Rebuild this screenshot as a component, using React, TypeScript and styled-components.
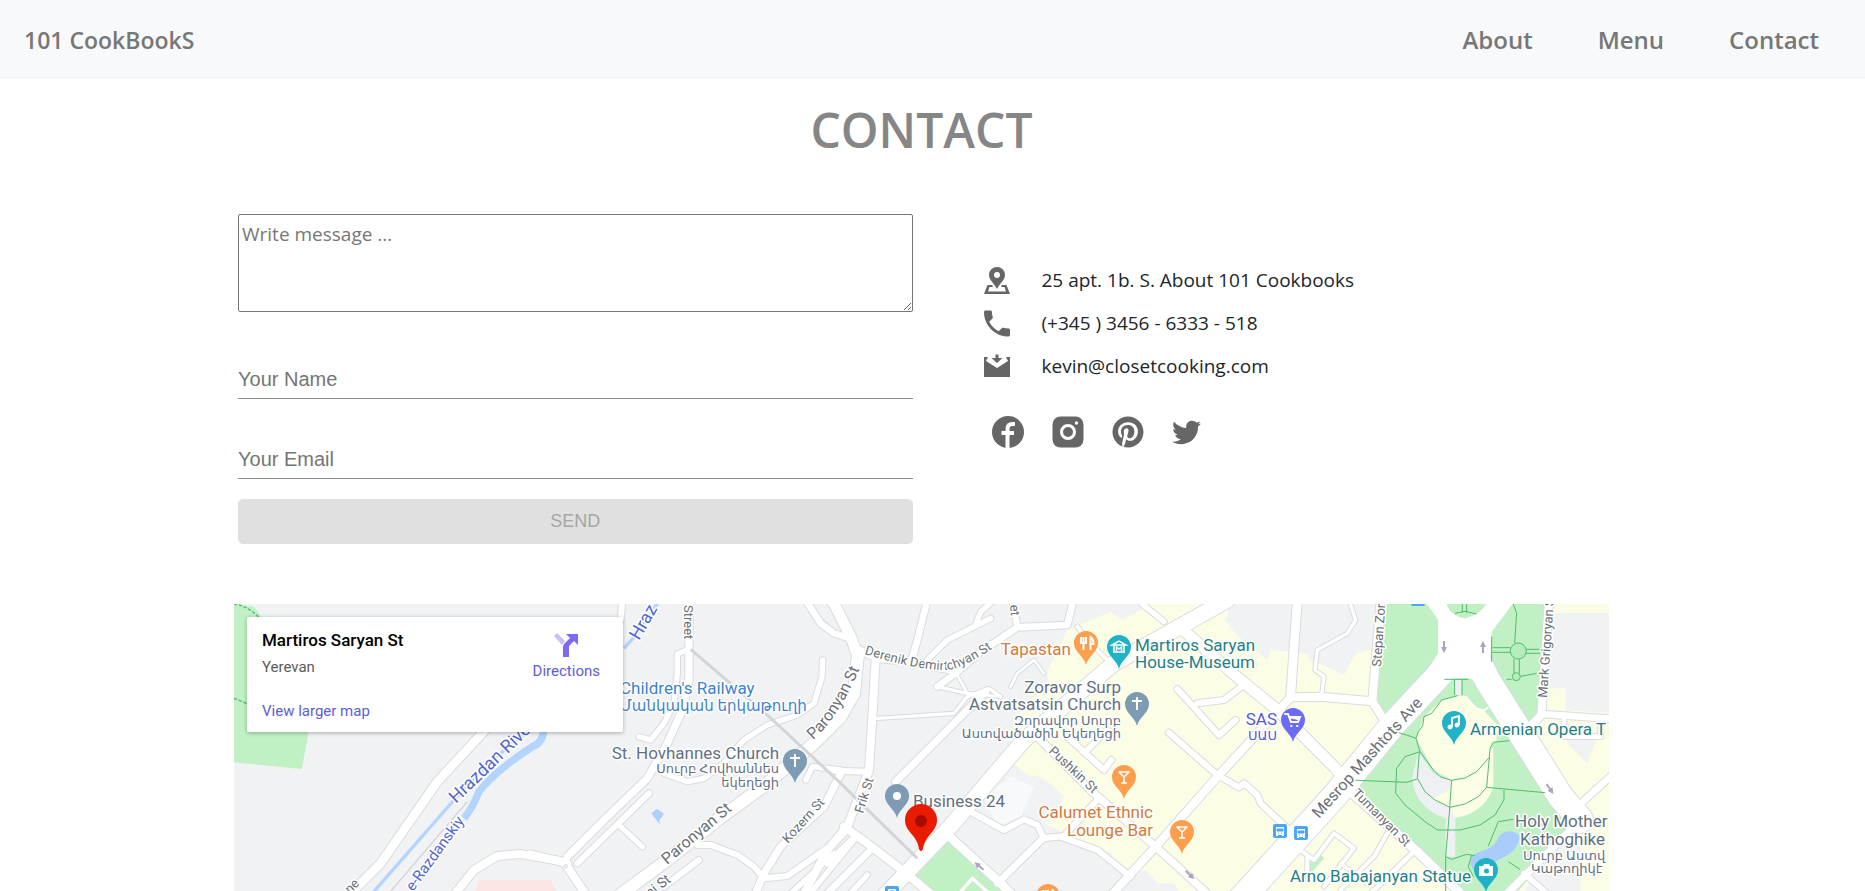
import React from 'react';
import styled, { createGlobalStyle } from 'styled-components';
import { FaPinterest, FaTwitter } from 'react-icons/fa';

const GlobalStyle = createGlobalStyle`
  *, *::before, *::after { box-sizing: border-box; }
  body {
    margin: 0;
    background: #fff;
    color: #212529;
    font-family: 'Open Sans', 'Noto Sans', sans-serif;
  }
`;

const Page = styled.div`
  display: flex;
  flex-direction: column;
  min-height: 100vh;
`;

const Header = styled.header`
  display: flex;
  align-items: center;
  justify-content: space-between;
  min-height: 79px;
  padding: 0 46px 0 24px;
  background: #f8f9fb;
`;

const NavLink = styled.a`
  color: #777;
  font-size: 24px;
  font-weight: 600;
  line-height: 36px;
  text-decoration: none;
`;

const Brand = styled(NavLink)`
  font-size: 23px;
`;

const Nav = styled.nav`
  display: flex;
  gap: 65px;
`;

const Main = styled.main`
  display: flex;
  flex: 1;
  flex-direction: column;
  width: 100%;
  padding: 0 22px 0 0;
`;

const Container = styled.div`
  display: flex;
  flex: 1;
  flex-direction: column;
  width: 100%;
  max-width: 1375px;
  margin: 0 auto;
`;

const Title = styled.h1`
  margin: 17px 0 50px;
  color: #868686;
  font-size: 48px;
  font-weight: 600;
  line-height: 68px;
  text-align: center;
`;

const Columns = styled.div`
  display: grid;
  grid-template-columns: 1fr 1fr;
  margin-bottom: 60px;
`;

const Form = styled.form`
  display: flex;
  flex-direction: column;
  padding: 0 9px 0 4px;
`;

const Message = styled.textarea`
  height: 98px;
  margin-bottom: 48px;
  padding: 4px 3px;
  border: 1px solid #767676;
  border-radius: 2px;
  background: #fff;
  font-family: 'Open Sans', 'Noto Sans', sans-serif;
  font-size: 19px;
  line-height: 30px;
  resize: vertical;
  &::placeholder { color: #777; }
`;

const Field = styled.input`
  height: 39px;
  margin-bottom: 41px;
  padding: 0;
  border: 0;
  border-bottom: 1px solid #8c8c8c;
  background: transparent;
  font-family: 'Liberation Sans', Arial, sans-serif;
  font-size: 20px;
  line-height: 24px;
  &::placeholder { color: #757575; }
  &:last-of-type { margin-bottom: 20px; }
`;

const SendButton = styled.button`
  height: 45px;
  border: 0;
  border-radius: 5px;
  background: #e0e0e0;
  color: #a6a6a6;
  font-family: 'Liberation Sans', Arial, sans-serif;
  font-size: 18px;
`;

const Details = styled.address`
  display: flex;
  flex-direction: column;
  padding: 44px 0 0 62px;
  font-style: normal;
`;

const DetailRow = styled.div`
  display: flex;
  align-items: center;
  gap: 32px;
  height: 43px;
  color: #212529;
  font-size: 19px;
  line-height: 28px;
  svg { width: 26px; height: 27px; margin-top: 2px; flex: none; fill: #666; }
`;

const SocialRow = styled.div`
  display: flex;
  align-items: center;
  gap: 28px;
  margin: 29px 0 0 8px;
`;

const SocialLink = styled.a`
  display: flex;
  align-items: center;
  justify-content: center;
  height: 32px;
  color: #666;
`;

const MapFrame = styled.section`
  position: relative;
  flex: 1;
  min-height: 287px;
  overflow: hidden;
  background: #f1f2f4;
`;

const MapCanvas = styled.svg`
  position: absolute;
  inset: 0;
  width: 100%;
  height: 100%;
  font-family: Roboto, 'DejaVu Sans', sans-serif;
`;

const PlaceCard = styled.div`
  position: absolute;
  top: 13px;
  left: 13px;
  display: flex;
  justify-content: space-between;
  width: 376px;
  height: 115px;
  padding: 12px 23px 10px 15px;
  border-radius: 2px;
  background: #fff;
  box-shadow: 0 1px 4px rgba(0, 0, 0, 0.3);
  font-family: Roboto, sans-serif;
  font-size: 15px;
  line-height: 20px;
  a { color: #5c5ce0; text-decoration: none; }
`;

const PlaceText = styled.div`
  display: flex;
  flex-direction: column;
  align-items: flex-start;
`;

const PlaceName = styled.strong`
  color: #000;
  font-size: 17px;
  font-weight: 500;
  line-height: 22px;
`;

const PlaceCity = styled.span`
  margin: 6px 0 24px;
  color: #5b5b5b;
`;

const Directions = styled.a`
  display: flex;
  flex-direction: column;
  align-items: center;
  gap: 4px;
  padding-top: 4px;
`;

type Road = [width: number, points: string];

/* Survey grid: three units to one map pixel. */
const roads: Road[] = [
  [26, '800,340 610,545 440,790 350,880'],
  [24, '660,885 720,810 790,768 860,762 990,785 1010,815 1060,890'],
  [18, '1165,0 1160,60'],
  [22, '1365,0 1365,240 1345,330 1300,430 1240,535 1115,655 1000,770'],
  [16, '1365,148 1330,162 1330,220 1320,310 1290,370 1250,420 1215,410'],
  [18, '1245,580 1030,790'],
  [16, '1160,680 1225,740'],
  [22, '890,762 1000,790'],
  [36, '1110,920 1300,780 1450,660 1600,550 1740,430 1820,350 1860,280 1872,160'],
  [32, '1872,170 1850,110 1800,10 1790,0'],
  [20, '1715,0 1760,70 1800,100 1850,115'],
  [16, '1766,180 1764,230 1740,310 1690,345 1600,375 1530,420 1470,490 1410,535 1360,545 1290,520'],
  [16, '1716,540 1735,500 1820,510'],
  [24, '1925,180 1915,350 1905,510 1840,680 1780,750 1700,900'],
  [18, '1800,512 1905,515'],
  [22, '1820,520 1770,620 1640,740 1590,820 1560,890'],
  [18, '1390,735 1430,735 1510,765 1560,800 1590,835 1660,828 1800,730 1840,690'],
  [18, '1290,860 1395,780'],
  [16, '1660,890 1800,760'],
  [16, '1720,890 1860,720'],
  [22, '1865,145 1930,175 2030,185 2150,210'],
  [20, '2080,0 2050,120 2032,185'],
  [16, '2080,180 2140,120 2230,75 2270,55'],
  [16, '2225,75 2240,35 2275,5'],
  [18, '2335,0 2350,80'],
  [20, '2110,260 2165,220 2240,155 2350,82 2500,75 2518,0'],
  [10, '1930,355 2160,340 2200,290 2265,265 2300,290'],
  [10, '2110,260 2220,285'],
  [8, '2170,225 2200,280 2300,290'],
  [8, '2330,260 2350,220 2400,180 2430,220'],
  [22, '1985,545 2110,420 2255,275'],
  [46, '1930,910 2140,690 2370,420 2640,190 2820,90 2980,0'],
  [24, '1830,680 1900,730 2010,815 2100,890'],
  [20, '1780,790 1865,710'],
  [20, '1780,880 1915,745'],
  [16, '1840,890 1900,825'],
  [26, '2130,695 2300,850 2340,890'],
  [18, '2200,630 2310,690 2370,658 2410,675 2430,715 2490,708 2590,600'],
  [20, '2290,850 2430,712'],
  [18, '2480,710 2590,750 2690,830'],
  [22, '2410,410 2580,580 2765,740 2930,890'],
  [18, '2500,410 2610,510 2632,480'],
  [18, '2560,450 2620,390'],
  [12, '2530,80 2560,120 2620,180'],
  [16, '2710,0 2790,65'],
  [32, '2830,75 3020,240 3130,330 3300,500 3340,545'],
  [26, '3190,0 3170,290'],
  [24, '2600,920 2765,740 2955,525 3080,390 3170,292 3260,290 3415,304 3450,360'],
  [24, '3440,0 3415,305'],
  [10, '3345,0 3365,60 3340,100 3250,150 3243,210 3270,230 3263,285'],
  [18, '2830,267 2955,405 3005,360'],
  [18, '2890,310 2970,300 3020,262'],
  [18, '2805,398 2950,525 3015,562 3030,550 3070,585 3080,610 3165,690'],
  [76, '3000,920 3300,590 3480,370 3620,220 3690,130'],
  [76, '3720,160 3760,240 3980,590 4040,660'],
  [26, '3310,540 3550,755 3700,900'],
  [12, '3170,730 3240,780 3300,700 3360,745 3270,860'],
  [12, '3220,770 3220,830'],
  [14, '3540,755 3400,890'],
  [12, '3460,700 3420,770 3320,870'],
  [10, '3320,790 3400,850'],
  [24, '3945,0 3922,345 3870,400'],
  [20, '3922,342 4140,357'],
  [14, '3990,355 3990,410 4100,410 4100,360'],
  [20, '4030,620 4140,520'],
  [22, '3800,900 4050,650'],
  [16, '3870,820 3950,890'],
];

const railway = '1370,148 1600,345 1815,545 2050,775';

const greens = [
  '0,12 60,20 90,60 180,380 224,400 203,507 0,487',
  '2028,830 2130,712 2320,890 2080,890',
  '3458,0 3578,12 3613,60 3613,160 3588,210 3450,345 3428,310',
  '3838,0 3938,0 3915,340 3888,368 3768,212 3773,100 3780,75',
  '3620,235 3710,235 3830,420 3960,600 4030,660 3830,900 3690,900 3360,548 3480,395 3560,330',
  '3215,810 3250,755 3270,775 3235,815',
];

const parkPaths = [
  'M283 238h72M314 240v45M336 240v45M323 287L275 300L245 340L222 350L218 378L205 395L198 415L210 455L250 510L270 530L305 541L345 534L380 515L418 472L420 445L430 427L478 422',
  'M208 455L202 535L225 575L255 600L300 622L345 612L385 590L410 562L418 472',
  'M210 455L165 470L140 505L137 580L165 615L225 665L262 690H330L390 675L435 645L462 600V570',
  'M0 540L170 547L202 537M410 562L585 578M143 397L185 410L198 415',
  'M305 541L298 640L287 770L305 778L350 763L375 767M415 738L445 665L490 658M287 770V880M475 785L510 808M365 765L355 800L370 830',
  'M490 12L500 40L494 130M428 143h52M428 157h52M528 148h42M528 160h42M492 176v44M508 176v44M512 229L560 220M470 238h15M425 110v75',
  'M337 12V38M350 12V38M315 40L345 34L380 42',
];

const glyphs = {
  fork: <path d="M-5-28v6h5v-6M-2.500-28v13M4.500-15v-13q3 2 3 7h-3" strokeWidth="2" fill="none" />,
  museum: (
    <path
      d="M-6-17h12M-5-18v-6M5-18v-6M-7-24L0-28l7 4zM-2.500-18v-4l2.500 2 2.500-2v4"
      strokeWidth="1.500"
      fill="none"
    />
  ),
  cross: <path d="M0-29v13M-5-25H5" strokeWidth="2" fill="none" />,
  dot: <circle cy="-22" r="4" stroke="none" />,
  cart: <path d="M-8-28h3l3 8h7l2-5h-11l9 2M-2-16h.5M4-16h.5" strokeWidth="2" strokeLinecap="round" fill="none" />,
  glass: <path d="M-5-27H5L0-22ZM0-22v6M-3-16h6" strokeWidth="1.500" strokeLinejoin="round" fill="none" />,
  note: (
    <g>
      <path d="M-2-18v-9l7-2v9" strokeWidth="2" fill="none" />
      <circle cx="-4" cy="-18" r="2" />
      <circle cx="3" cy="-20" r="2" />
    </g>
  ),
  camera: (
    <g>
      <path d="M-7-26h4l1-2h5l1 2h3v10H-7z" stroke="none" />
      <circle cx=".5" cy="-21" r="2.500" fill="#1fb2c6" stroke="none" />
    </g>
  ),
};

type Pin = { x: number; y: number; fill: string; icon: keyof typeof glyphs };

const pins: Pin[] = [
  { x: 852, y: 61, fill: '#fb9f4f', icon: 'fork' },
  { x: 885, y: 65, fill: '#22b2c7', icon: 'museum' },
  { x: 903, y: 122, fill: '#7d9bb3', icon: 'cross' },
  { x: 561, y: 179, fill: '#7d9bb3', icon: 'cross' },
  { x: 663, y: 214, fill: '#7d9bb3', icon: 'dot' },
  { x: 1059, y: 138, fill: '#6a6bf8', icon: 'cart' },
  { x: 890, y: 195, fill: '#fb9f4f', icon: 'glass' },
  { x: 948, y: 250, fill: '#fb9f4f', icon: 'glass' },
  { x: 1220, y: 141, fill: '#22b2c7', icon: 'note' },
  { x: 1252, y: 288, fill: '#1fb2c6', icon: 'camera' },
  { x: 814, y: 314, fill: '#fb9f4f', icon: 'fork' },
];

const ink = {
  orange: '#d27a3c',
  teal: '#1d8184',
  slate: '#5f7080',
  blue: '#3c82d2',
  indigo: '#5458d6',
  river: '#5165d4',
  road: '#6b6f76',
};

type LabelProps = {
  x: number;
  y: number;
  color?: string;
  size?: number;
  end?: boolean;
  angle?: number;
  children: string;
};

const Halo = styled.text<{ $size: number }>`
  font-size: ${(p) => p.$size}px;
  paint-order: stroke;
  stroke: #fff;
  stroke-width: 3px;
  stroke-linejoin: round;
`;

const Label = ({ x, y, color = ink.road, size = 17, end, angle = 0, children }: LabelProps) => (
  <Halo
    $size={size}
    fill={color}
    textAnchor={end ? 'end' : 'start'}
    transform={`translate(${x} ${y}) rotate(${angle})`}
  >
    {children}
  </Halo>
);

const BusStop = ({ x, y }: { x: number; y: number }) => (
  <g transform={`translate(${x} ${y})`}>
    <rect x="-7" y="-7" width="14" height="14" rx="2" fill="#4ba6f5" />
    <rect x="-4" y="-4" width="8" height="8" rx="1" fill="#fff" />
    <path d="M-3-2h6v2h-6zM-2 2h1M1 2h1" fill="#4ba6f5" stroke="#4ba6f5" />
    <path d="M-3 4v1M3 4v1" stroke="#fff" strokeWidth="2" />
  </g>
);

const Arrow = ({ x, y, angle }: { x: number; y: number; angle: number }) => (
  <path
    transform={`translate(${x} ${y}) rotate(${angle})`}
    d="M-1 6v-6h-2l3-6 3 6h-2v6z"
    fill="#aaa3c2"
  />
);

const CityMap = () => (
  <MapCanvas role="img" aria-label="Map of Yerevan around Martiros Saryan St">
    <g transform="scale(.33333) translate(0 -12)">
      <polygon
        fill="#fbfde5"
        points="2440,215 2500,90 2535,75 2630,35 2665,60 2720,30 2735,0 2965,0 2985,25 2975,60 3000,95 3040,135 3100,180 3110,150 3220,160 3225,180 3290,205 3330,225 3365,160 3400,150 3430,150 3460,0 4140,0 4140,900 2850,900 2820,850 2770,850 2740,815 2640,795 2635,760 2560,740 2490,700 2430,670 2470,640 2490,590 2455,555 2405,525 2390,530 2340,495 2370,440 2320,420 2360,330 2440,250"
      />
      <polygon fill="#f1f2f4" points="3950,40 4140,40 4140,340 3995,330 3995,265 3930,265" />
      <polygon fill="#f1f2f4" points="3998,370 4090,410 4060,490 4000,430" />
      <polygon fill="#f1f2f4" points="3960,700 4040,690 4040,900 3860,900" />
      <polygon fill="#f8f9fb" points="2250,590 2330,530 2400,560 2360,650 2290,680" />
      <polygon fill="#fbe4e1" points="735,840 950,840 975,890 720,890" />
      {greens.map((p) => <polygon key={p} points={p} fill="#c0f0c3" />)}
      <path d="M0 12q40 5 75 40M0 295l50 20" fill="none" stroke="#50b878" strokeWidth="4" strokeDasharray="10 5" />
      <g fill="none" stroke="#b2d4fd">
        <path d="M1275 0Q1240 70 1170 145" strokeWidth="10" />
        <path d="M930 390Q925 430 895 440Q780 515 735 575Q715 625 690 655" strokeWidth="22" />
        <path d="M940 350Q760 480 660 600L415 880" strokeWidth="10" />
      </g>
      <path d="M700 605L465 880" stroke="#d2d3d6" strokeWidth="4" />
      <g fill="none" stroke="#dadbe1" strokeLinecap="round" strokeLinejoin="round">
        {roads.map(([w, p]) => <polyline key={p} points={p} strokeWidth={w + 6} />)}
      </g>
      <g fill="none" stroke="#fff" strokeLinecap="round" strokeLinejoin="round">
        {roads.map(([w, p]) => <polyline key={p} points={p} strokeWidth={w} />)}
      </g>
      <polygon fill="#aed0fd" points="1252,640 1270,626 1290,643 1276,660 1278,674" />
      <polygon
        fill="#fff"
        points="3578,0 3613,60 3613,160 3550,255 3650,235 3710,235 3790,285 3768,190 3770,100 3845,0"
      />
      <path d="M3638 0h125q-20 45-70 55q-40-5-55-40z" fill="#c0f0c3" />
      <polyline points={railway} fill="none" stroke="#d3d4d6" strokeWidth="9" />
      <g transform="translate(3348 0)">
        <path d="M323 287L345 288L375 322L402 332L440 372L440 422L425 430L418 472L380 515L305 541L250 510L198 415L222 350L275 300Z" fill="#fbfde5" />
        <path d="M305 541L380 515L430 440V560Q405 640 310 655L298 622L245 598Z" fill="#fbfde5" />
        <path d="M205 455L250 520L305 541L298 570L245 598L300 622L316 655V770H287V655Q190 620 187 530Z" fill="#eef0f3" />
        <rect x="314" y="240" width="22" height="45" fill="#eef0f3" />
        <path d="M375 815Q340 770 390 755T445 710Q475 680 508 705Q510 750 455 775T425 815Z" fill="#a9ccfd" />
        <path d="M345 288L378 325L402 332L415 322" fill="none" stroke="#fff" strokeWidth="6" />
        <g fill="none" stroke="#4ebd6d" strokeWidth="3">
          {parkPaths.map((d) => <path key={d} d={d} />)}
        </g>
        <circle cx="505" cy="153" r="24" fill="#b5ecbc" stroke="#4ebd6d" strokeWidth="3" />
        <circle cx="499" cy="230" r="12" fill="#b5ecbc" stroke="#4ebd6d" strokeWidth="3" />
      </g>
      <polyline points="2180,875 2215,835 2265,880" fill="none" stroke="#fff" strokeWidth="10" />
      <circle cx="995" cy="799" r="5" fill="none" stroke="#ccc" strokeWidth="3" />
    </g>

    <Arrow x={1210} y={43} angle={180} />
    <Arrow x={1249} y={43} angle={0} />
    <Arrow x={1316} y={185} angle={145} />
    <Arrow x={745} y={262} angle={-50} />
    <Arrow x={956} y={271} angle={135} />
    <BusStop x={1046} y={227} />
    <BusStop x={1067} y={229} />
    <BusStop x={658} y={289} />
    <BusStop x={1184} y={-5} />

    <Label x={222} y={200} angle={-44} size={18} color={ink.river}>Hrazdan Rive</Label>
    <Label x={179} y={288} angle={-54} size={15} color={ink.river}>e-Razdanskiy</Label>
    <Label x={405} y={37} angle={-60} size={18} color={ink.river}>Hraz</Label>
    <Label x={450} y={1} angle={90} size={13}>Street</Label>
    <Label x={116} y={290} angle={-45} size={13}>ne</Label>
    <Label x={433} y={261} angle={-40} size={16}>Paronyan St</Label>
    <Label x={554} y={240} angle={-48} size={13}>Kozern St</Label>
    <Label x={416} y={294} angle={-38} size={14}>ni St</Label>
    <Label x={776} y={1} angle={85} size={13}>et</Label>
    <Label x={629} y={210} angle={-73} size={13}>Frik St</Label>
    <Label x={814} y={148} angle={43} size={13}>Pushkin St</Label>
    <Label x={1085} y={215} angle={-48} size={16}>Mesrop Mashtots Ave</Label>
    <Label x={1118} y={190} angle={45} size={13}>Tumanyan St</Label>
    <Label x={1147} y={63} angle={-86} size={13}>Stepan Zor</Label>
    <Label x={1313} y={94} angle={-86} size={13}>Mark Grigoryan S</Label>
    <path id="paronyan" d="M579 136Q607 112 630 54" fill="none" />
    <path id="derenik" d="M630 50Q685 67 715 66Q738 60 766 39" fill="none" />
    <Halo $size={16} fill={ink.road}><textPath href="#paronyan">Paronyan St</textPath></Halo>
    <Halo $size={13} fill={ink.road}><textPath href="#derenik">Derenik Demirtchyan St</textPath></Halo>

    <Label x={386} y={90} color={ink.blue}>Children's Railway</Label>
    <Label x={386} y={107} size={15} color={ink.blue}>Մանկական երկաթուղի</Label>
    <Label x={545} y={155} end color={ink.slate}>St. Hovhannes Church</Label>
    <Label x={545} y={169} size={13} end color={ink.slate}>Սուրբ Հովհաննես</Label>
    <Label x={545} y={183} size={13} end color={ink.slate}>եկեղեցի</Label>
    <Label x={837} y={51} end color={ink.orange}>Tapastan</Label>
    <Label x={901} y={47} color={ink.teal}>Martiros Saryan</Label>
    <Label x={901} y={64} color={ink.teal}>House-Museum</Label>
    <Label x={887} y={89} end color={ink.slate}>Zoravor Surp</Label>
    <Label x={887} y={106} end color={ink.slate}>Astvatsatsin Church</Label>
    <Label x={887} y={121} size={13} end color={ink.slate}>Զորավոր Սուրբ</Label>
    <Label x={887} y={134} size={13} end color={ink.slate}>Աստվածածին Եկեղեցի</Label>
    <Label x={1043} y={121} end color={ink.indigo}>SAS</Label>
    <Label x={1043} y={136} size={13} end color={ink.indigo}>ՍԱՍ</Label>
    <Label x={679} y={203} color={ink.slate}>Business 24</Label>
    <Label x={919} y={214} end color={ink.orange}>Calumet Ethnic</Label>
    <Label x={919} y={232} end color={ink.orange}>Lounge Bar</Label>
    <Label x={1236} y={131} color={ink.teal}>Armenian Opera T</Label>
    <Label x={1281} y={223} color={ink.slate}>Holy Mother</Label>
    <Label x={1286} y={241} color={ink.slate}>Kathoghike</Label>
    <Label x={1289} y={256} size={13} color={ink.slate}>Սուրբ Աստվ</Label>
    <Label x={1297} y={269} size={13} color={ink.slate}>Կաթողիկէ</Label>
    <Label x={1237} y={278} end color={ink.teal}>Arno Babajanyan Statue</Label>

    {pins.map(({ x, y, fill, icon }) => (
      <g key={`${x}-${y}`} transform={`translate(${x} ${y})`} fill="#fff" stroke="#fff">
        <path d="M0 0C-2-9-12-13-12-22a12 12 0 0 1 24 0C12-13 2-9 0 0Z" fill={fill} stroke="none" />
        {glyphs[icon]}
      </g>
    ))}
    <g transform="translate(687 247)">
      <path d="M0 0C-3 0-1-6-7-14C-12-20-16-24-16-31a16 16 0 0 1 32 0C16-24 12-20 7-14C1-6 3 0 0 0Z" fill="#ea1c00" />
      <circle cy="-30" r="6" fill="#a90b00" />
    </g>
  </MapCanvas>
);

const AddressIcon = () => (
  <svg viewBox="0 0 26 27" aria-hidden="true">
    <path fillRule="evenodd" d="M13 0a8 8 0 0 0-8 8c0 5 5 8 8 14 3-6 8-9 8-14a8 8 0 0 0-8-8zm0 5a3 3 0 1 1 0 6 3 3 0 0 1 0-6z" />
    <path fillRule="evenodd" d="M3.500 18H8l1 2H5.500L4 24.500h18L20.500 20H17l1-2h4.500l3.500 9H0z" />
  </svg>
);

const PhoneIcon = () => (
  <svg viewBox="3 3 18 18" aria-hidden="true">
    <path d="M6.620 10.790c1.440 2.830 3.760 5.140 6.590 6.590l2.200-2.200c.270-.270.670-.360 1.020-.240 1.120.370 2.330.570 3.570.570.550 0 1 .450 1 1V20c0 .550-.450 1-1 1-9.390 0-17-7.610-17-17 0-.550.450-1 1-1h3.500c.550 0 1 .450 1 1 0 1.250.200 2.450.570 3.570.110.350.030.740-.250 1.020l-2.200 2.200z" />
  </svg>
);

const MailIcon = () => (
  <svg viewBox="0 0 26 27" aria-hidden="true">
    <path d="M0 4h4L2 8l11 7 11-7-2-4h4v20H0z" />
    <path d="M11.500 1.500h3V5h4L13 10 7.500 5h4z" />
  </svg>
);

const FacebookIcon = () => (
  <svg width="32" height="32" viewBox="0 0 32 32" aria-hidden="true">
    <circle cx="16" cy="16" r="16" fill="currentColor" />
    <path d="M15.500 32V13q0-5 5-5H23M9.500 17H22" fill="none" stroke="#fff" strokeWidth="4" />
  </svg>
);

const InstagramIcon = () => (
  <svg width="32" height="32" viewBox="0 0 32 32" aria-hidden="true">
    <rect x=".5" y=".5" width="31" height="31" rx="8" fill="currentColor" />
    <circle cx="16" cy="16" r="6.500" fill="none" stroke="#fff" strokeWidth="3" />
    <circle cx="24.500" cy="7" r="1.700" fill="#fff" />
  </svg>
);

const DirectionsIcon = () => (
  <svg width="24" height="24" viewBox="0 0 24 24" aria-hidden="true">
    <path d="M0 3l3-3 8 8-3 4z" fill="#c8c0fb" />
    <path d="M9 24V14q0-2 2-4l5-5-4-4h12v11l-4-4-5 5v11z" fill="#7a6af5" />
  </svg>
);

export default function App() {
  return (
    <Page>
      <GlobalStyle />
      <Header>
        <Brand href="#home">101 CookBookS</Brand>
        <Nav>
          <NavLink href="#about">About</NavLink>
          <NavLink href="#menu">Menu</NavLink>
          <NavLink href="#contact">Contact</NavLink>
        </Nav>
      </Header>
      <Main>
        <Container>
          <Title>CONTACT</Title>
          <Columns>
            <Form>
              <Message aria-label="Message" placeholder="Write message ..." />
              <Field type="text" aria-label="Your name" placeholder="Your Name" />
              <Field type="email" aria-label="Your email" placeholder="Your Email" />
              <SendButton type="submit" disabled>SEND</SendButton>
            </Form>
            <Details>
              <DetailRow><AddressIcon />25 apt. 1b. S. About 101 Cookbooks</DetailRow>
              <DetailRow><PhoneIcon />(+345 ) 3456 - 6333 - 518</DetailRow>
              <DetailRow><MailIcon />kevin@closetcooking.com</DetailRow>
              <SocialRow>
                <SocialLink href="#facebook" aria-label="Facebook"><FacebookIcon /></SocialLink>
                <SocialLink href="#instagram" aria-label="Instagram"><InstagramIcon /></SocialLink>
                <SocialLink href="#pinterest" aria-label="Pinterest"><FaPinterest size={32} /></SocialLink>
                <SocialLink href="#twitter" aria-label="Twitter"><FaTwitter size={29} /></SocialLink>
              </SocialRow>
            </Details>
          </Columns>
          <MapFrame>
            <CityMap />
            <PlaceCard>
              <PlaceText>
                <PlaceName>Martiros Saryan St</PlaceName>
                <PlaceCity>Yerevan</PlaceCity>
                <a href="#map">View larger map</a>
              </PlaceText>
              <div>
                <Directions href="#directions"><DirectionsIcon />Directions</Directions>
              </div>
            </PlaceCard>
          </MapFrame>
        </Container>
      </Main>
    </Page>
  );
}
